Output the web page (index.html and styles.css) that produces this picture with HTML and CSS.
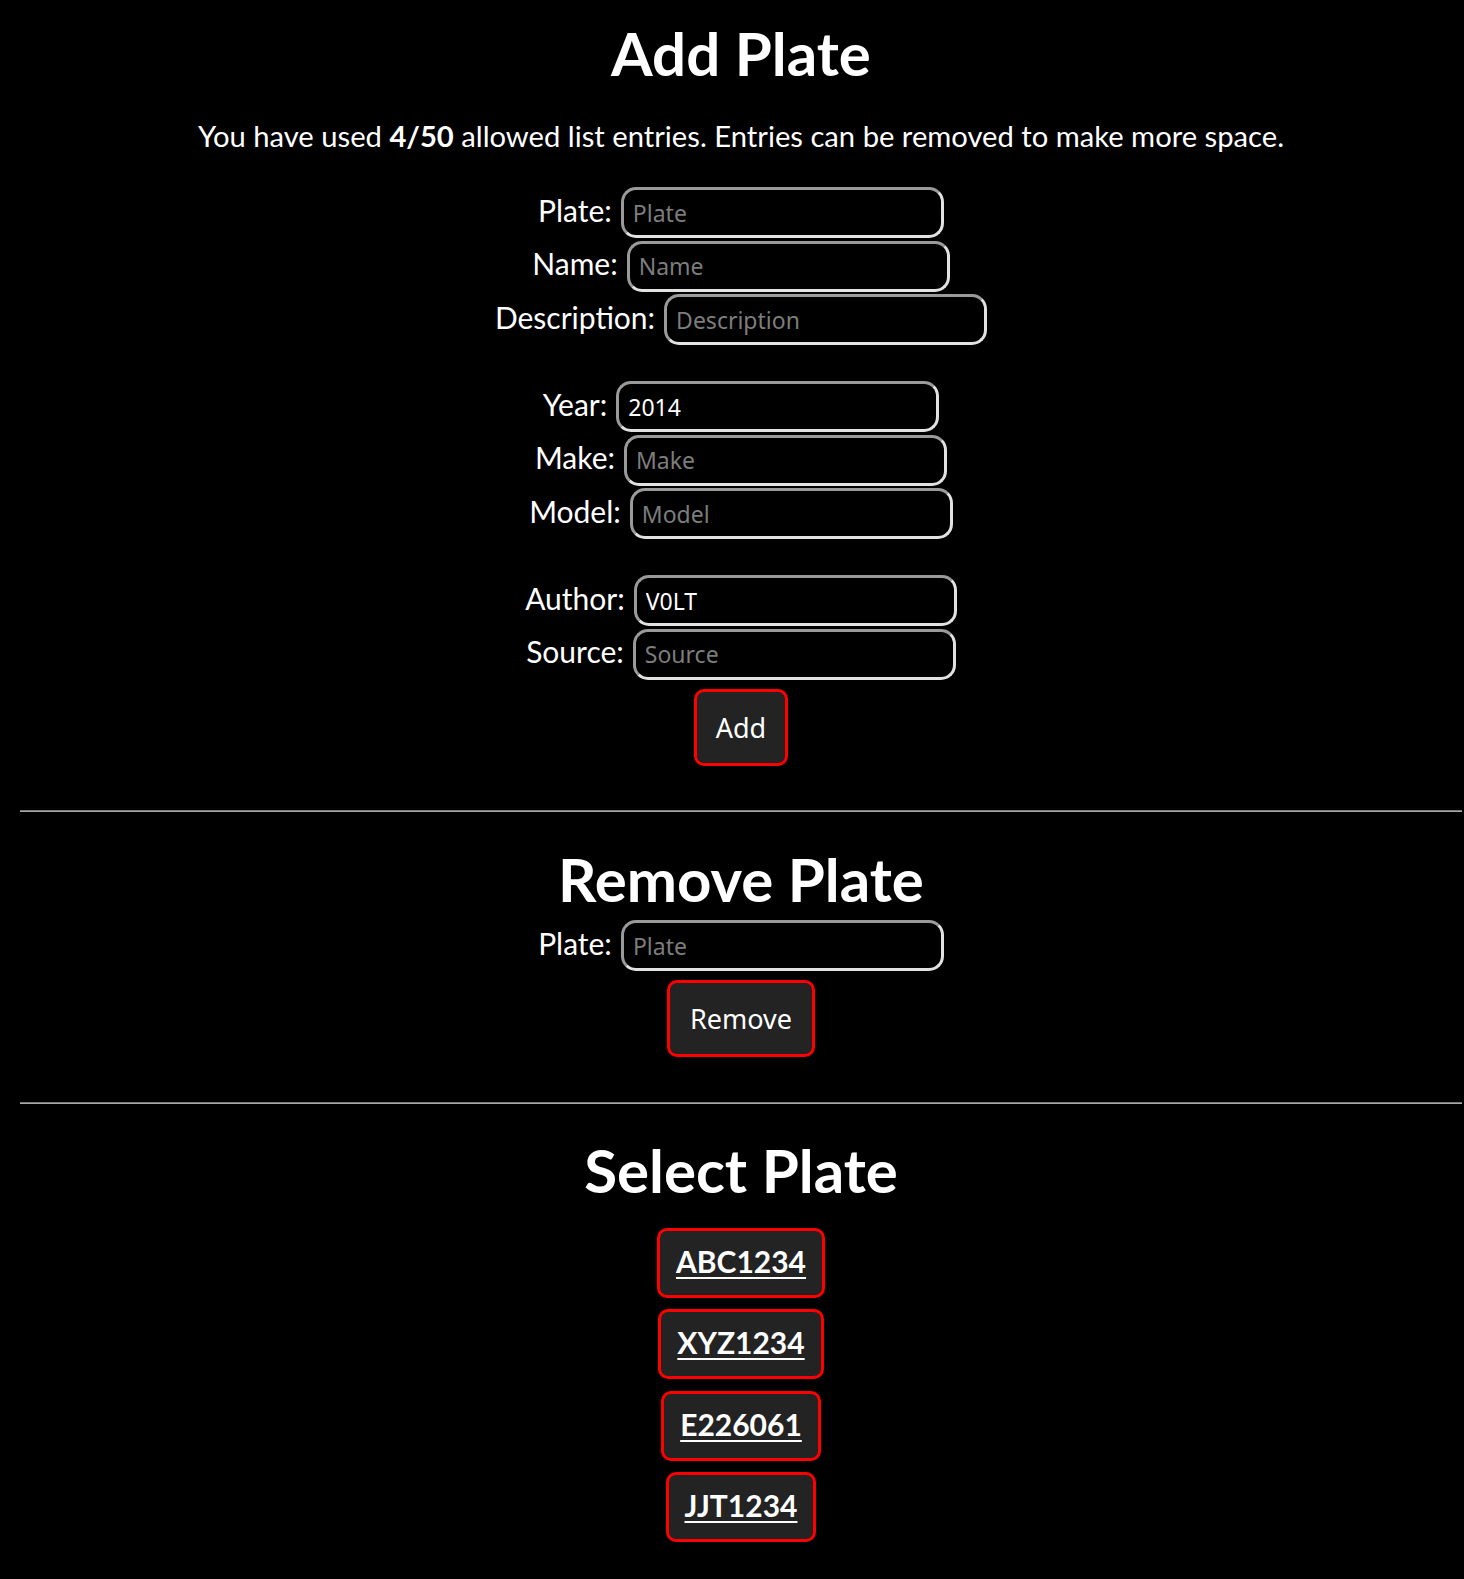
FILE: index.html
```html
<!DOCTYPE html>
<html lang="en">
<head>
<meta charset="utf-8">
<title>Plates</title>
<link rel="stylesheet" href="styles.css">
</head>
<body>
<main class="page">
  <h1 class="title title-first">Add Plate</h1>
  <p class="usage">You have used <b>4/50</b> allowed list entries. Entries can be removed to make more space.</p>
  <form class="plate-form add-form">
    <div class="group">
      <div class="row"><label class="label" for="plate">Plate:</label><input class="field" id="plate" placeholder="Plate"></div>
      <div class="row"><label class="label" for="name">Name:</label><input class="field" id="name" placeholder="Name"></div>
      <div class="row"><label class="label" for="desc">Description:</label><input class="field" id="desc" placeholder="Description"></div>
    </div>
    <div class="group group-spaced">
      <div class="row"><label class="label" for="year">Year:</label><input class="field" id="year" placeholder="Year" value="2014"></div>
      <div class="row"><label class="label" for="make">Make:</label><input class="field" id="make" placeholder="Make"></div>
      <div class="row"><label class="label" for="model">Model:</label><input class="field" id="model" placeholder="Model"></div>
    </div>
    <div class="group group-spaced">
      <div class="row"><label class="label" for="author">Author:</label><input class="field" id="author" placeholder="Author" value="V0LT"></div>
      <div class="row"><label class="label" for="source">Source:</label><input class="field" id="source" placeholder="Source"></div>
    </div>
    <button type="button" class="action action-add">Add</button>
  </form>
  <hr class="divider divider-first">
  <h1 class="title title-remove">Remove Plate</h1>
  <form class="plate-form remove-form">
    <div class="group">
      <div class="row"><label class="label" for="rplate">Plate:</label><input class="field" id="rplate" placeholder="Plate"></div>
    </div>
    <button type="button" class="action action-remove">Remove</button>
  </form>
  <hr class="divider divider-second">
  <h1 class="title title-select">Select Plate</h1>
  <div class="plate-list">
    <button type="button" class="plate-btn"><a class="plate-link" href="#">ABC1234</a></button>
    <button type="button" class="plate-btn"><a class="plate-link" href="#">XYZ1234</a></button>
    <button type="button" class="plate-btn"><a class="plate-link" href="#">E226061</a></button>
    <button type="button" class="plate-btn"><a class="plate-link" href="#">JJT1234</a></button>
  </div>
</main>
</body>
</html>
```
FILE: styles.css
```css
html, body {
  background: #000;
}
body {
  margin: 0;
  color: #fff;
  font-family: Lato, "Liberation Sans", sans-serif;
}
.page {
  margin: 0 2px 0 20px;
  padding-top: 17px;
  padding-bottom: 36px;
  display: flex;
  flex-direction: column;
  align-items: center;
}
.title {
  margin: 0;
  font-size: 60px;
  line-height: 72px;
  font-weight: 700;
  text-align: center;
}
.title-remove { margin-top: 31px; }
.title-select { margin-top: 30px; }
.usage {
  margin: 30px 0 0;
  font-size: 29.2px;
  line-height: 34px;
  text-align: center;
}
.usage b { font-weight: 700; }
.plate-form {
  display: flex;
  flex-direction: column;
  align-items: center;
}
.add-form { margin-top: 34px; }
.remove-form { margin-top: 5px; }
.group {
  display: flex;
  flex-direction: column;
  align-items: center;
  gap: 2.5px;
}
.group-spaced { margin-top: 36px; }
.row {
  display: flex;
  align-items: baseline;
  justify-content: center;
  gap: 9px;
}
.label {
  font-size: 30px;
  line-height: 36px;
}
.field {
  box-sizing: border-box;
  width: 323px;
  height: 51px;
  margin: 0;
  padding: 0 9px;
  background: #000;
  color: #fff;
  font-family: "Noto Sans", "Open Sans", sans-serif;
  font-size: 23px;
  border-style: solid;
  border-width: 3px;
  border-color: #9a9a9a #e2e2e2 #e2e2e2 #9a9a9a;
  border-radius: 15px;
  outline: none;
}
.field::placeholder {
  color: #7d7d7d;
  opacity: 1;
}
.action {
  margin: 9.5px 0 0;
  padding: 17px 19px;
  background: #232323;
  color: #fff;
  font-family: "Noto Sans", "Open Sans", sans-serif;
  font-size: 27px;
  line-height: 37px;
  border: 3px solid #f00;
  border-radius: 10px;
}
.action-remove { margin-top: 9px; padding: 17px 20px; }
.divider {
  align-self: stretch;
  margin: 44px 0 0;
  height: 0;
  border: 0;
  border-top: 1px solid #7a7a7a;
  border-bottom: 1px solid #a8a8a8;
}
.divider-second { margin-top: 45px; }
.plate-list {
  margin-top: 22px;
  display: flex;
  flex-direction: column;
  align-items: center;
  gap: 11.3px;
}
.plate-btn {
  margin: 0;
  padding: 12px 16px 16px;
  background: #232323;
  border: 3px solid #f00;
  border-radius: 10px;
  font-family: Lato, sans-serif;
  font-size: 30px;
  line-height: 36px;
}
.plate-link {
  color: #fff;
  font-weight: 700;
  text-decoration: underline;
  text-decoration-thickness: 1.5px;
  text-underline-offset: 4px;
}
```
